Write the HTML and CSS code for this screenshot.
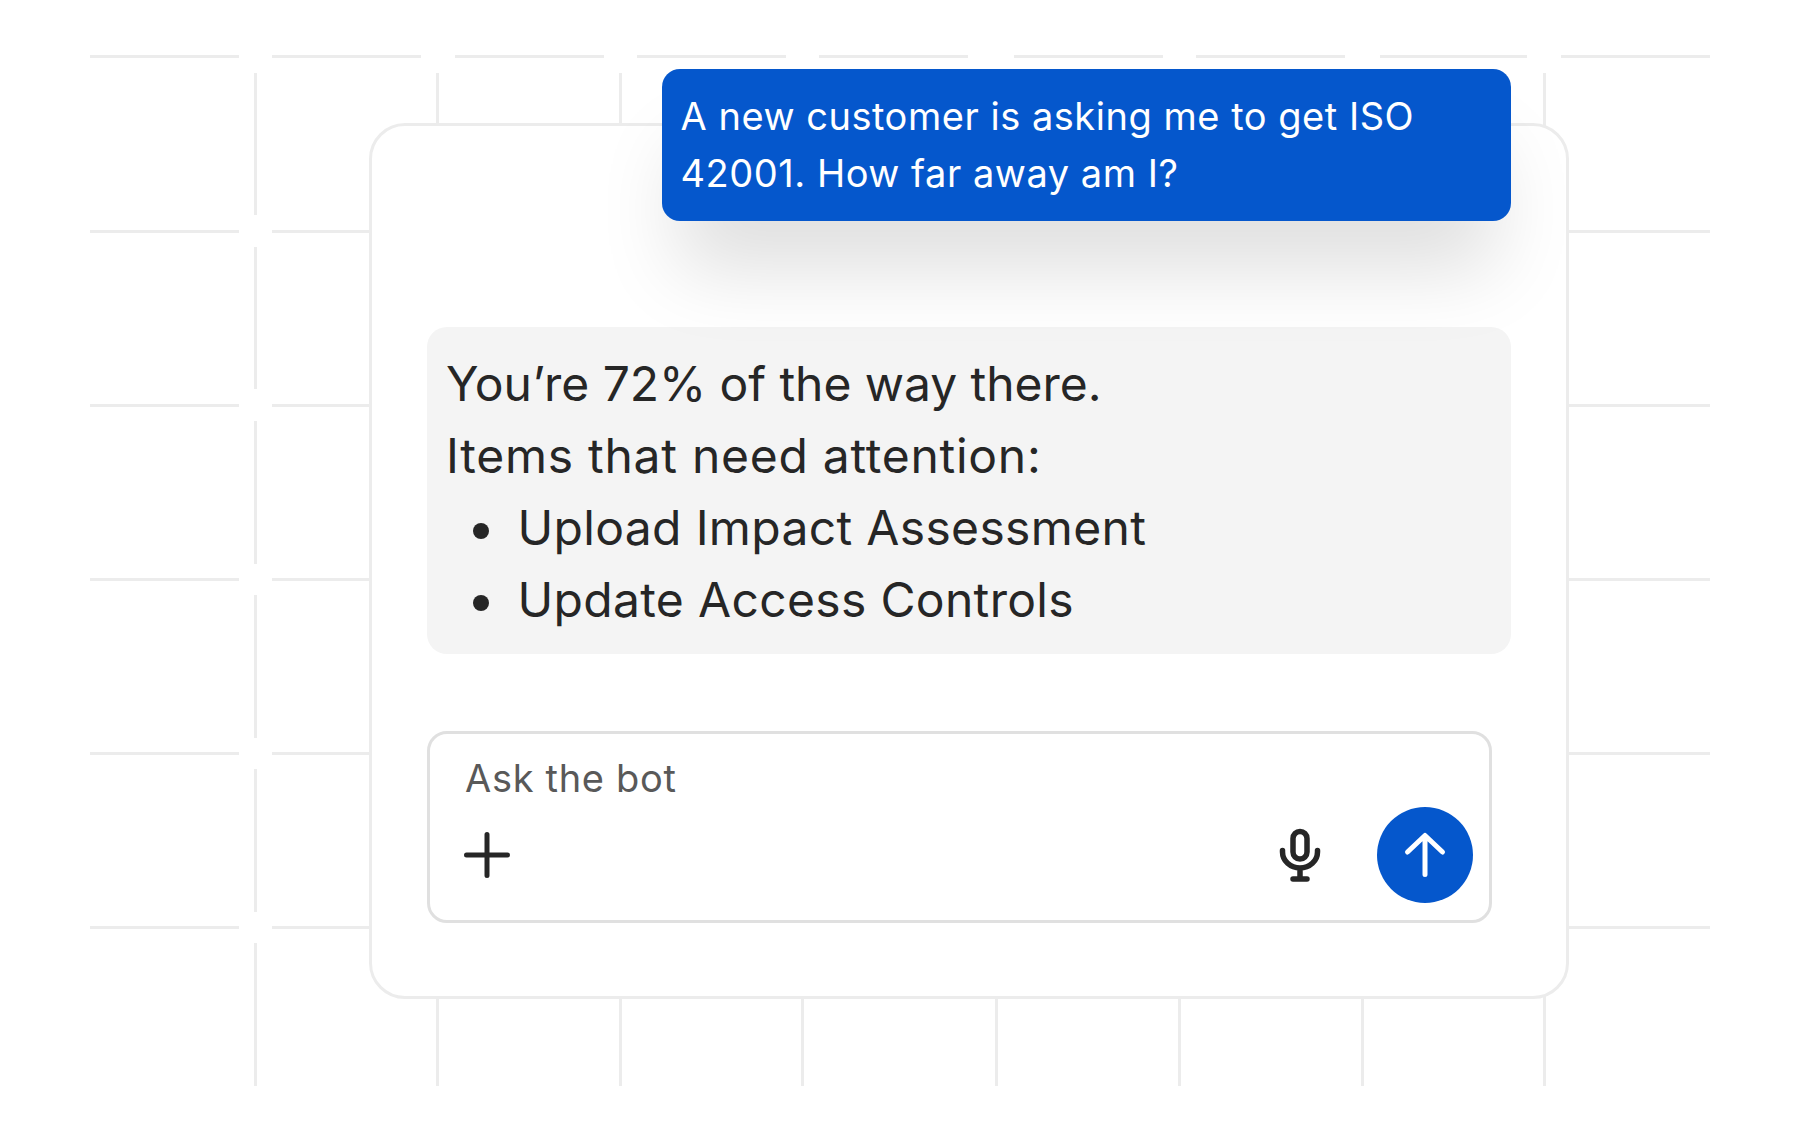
FILE: index.html
```html
<!DOCTYPE html>
<html lang="en">
<head>
    <meta charset="UTF-8">
    <meta name="viewport" content="width=device-width, initial-scale=1.0">
    <title>Ask the bot</title>
    <link rel="stylesheet" href="styles.css">
</head>
<body>
    <div class="stage">
        <svg class="grid" width="1800" height="1143" viewBox="0 0 1800 1143" fill="none" stroke="#ececec" stroke-width="3">
            <path d="M90 56.5H239M272 56.5H421M455 56.5H604M637 56.5H786M819 56.5H968M1014 56.5H1163M1196 56.5H1345M1380 56.5H1527M1561 56.5H1710"/>
            <path d="M90 231.5H239M272 231.5H421M1561 231.5H1710"/>
            <path d="M90 405.5H239M272 405.5H421M1561 405.5H1710"/>
            <path d="M90 579.5H239M272 579.5H421M1561 579.5H1710"/>
            <path d="M90 753.5H239M272 753.5H421M1561 753.5H1710"/>
            <path d="M90 927.5H239M272 927.5H421M1561 927.5H1710"/>
            <path d="M255.500 73V215M255.500 247V389M255.500 421V564M255.500 595V738M255.500 769V912M255.500 943V1086"/>
            <path d="M437.500 73V130M620.500 73V130M1544.500 73V130"/>
            <path d="M437.500 995V1086M620.500 995V1086M802.500 995V1086M996.500 995V1086M1179.500 995V1086M1362.500 995V1086M1544.500 995V1086"/>
        </svg>

        <div class="card">
            <div class="bubble-user">A new customer is asking me to get ISO 42001. How far away am I?</div>
            <div class="bubble-bot">
                <p class="line-first">You’re 72% of the way there.</p>
                <p class="line-second">Items that need attention:</p>
                <ul>
                    <li>Upload Impact Assessment</li>
                    <li>Update Access Controls</li>
                </ul>
            </div>
            <div class="ask-box">
                <div class="ask-label">Ask the bot</div>
                <div class="ask-tools">
                    <svg class="icon-plus" width="46" height="46" viewBox="0 0 46 46" fill="none" stroke="#262626" stroke-width="5" stroke-linecap="round">
                        <path d="M23 2.500V43.500M2.500 23H43.500"/>
                    </svg>
                    <svg class="icon-mic" width="44" height="54" viewBox="0 0 44 54" fill="none" stroke="#262626" stroke-width="5.500" stroke-linecap="round">
                        <rect x="15" y="3.500" width="14" height="27.500" rx="7"/>
                        <path d="M4.500 22.500V24A17.500 16 0 0 0 39.500 24V22.500M22 40V50M15 51H29"/>
                    </svg>
                    <button class="send">
                        <svg width="46" height="46" viewBox="0 0 46 46" fill="none" stroke="#fff" stroke-width="5" stroke-linecap="round" stroke-linejoin="round">
                            <path d="M23 42.500V4M5.500 20L23 3.500L40.500 20"/>
                        </svg>
                    </button>
                </div>
            </div>
        </div>
    </div>
</body>
</html>
```
FILE: styles.css
```css
* {
    box-sizing: border-box;
}
body {
    font-family: Inter, 'Noto Sans', sans-serif;
    margin: 0;
    background-color: #ffffff;
    color: #262626;
}
.stage {
    position: relative;
    width: 1800px;
    height: 1143px;
    padding: 123px 0 0 369px;
    overflow: hidden;
}
.grid {
    position: absolute;
    left: 0;
    top: 0;
}
.card {
    position: relative;
    width: 1200px;
    height: 876px;
    padding: 0 55px;
    background-color: #ffffff;
    border: 3px solid #ececec;
    border-radius: 36px;
}
.bubble-user {
    position: relative;
    z-index: 1;
    width: 849.500px;
    height: 152px;
    margin: -57px 0 0 234.500px;
    padding: 19px 19px;
    background-color: #0557cc;
    color: #ffffff;
    font-size: 38px;
    line-height: 57px;
    letter-spacing: 0.52px;
    border-radius: 18px;
    box-shadow: 0 64px 80px -16px rgba(0, 0, 0, 0.13);
}
.bubble-bot {
    width: 1084px;
    height: 327px;
    margin-top: 106px;
    padding: 21px 19px;
    background-color: #f4f4f4;
    font-size: 48px;
    line-height: 72px;
    letter-spacing: 0.33px;
    border-radius: 20px;
}
.bubble-bot p {
    margin: 0;
}
.line-first {
    letter-spacing: -0.05px;
}
.line-second {
    letter-spacing: 0.73px;
}
.bubble-bot ul {
    margin: 0;
    padding: 0 0 0 27px;
    list-style: none;
}
.bubble-bot li {
    display: flex;
    align-items: center;
}
.bubble-bot li::before {
    content: "";
    width: 16px;
    height: 16px;
    margin: 5px 28.500px 0 0;
    background-color: #262626;
    border-radius: 50%;
}
.ask-box {
    width: 1065px;
    height: 192px;
    margin-top: 77px;
    padding: 17px 16px 16px 35px;
    border: 3px solid #e0e0e0;
    border-radius: 20px;
}
.ask-label {
    color: #595959;
    font-size: 38px;
    line-height: 54px;
    letter-spacing: 0.68px;
}
.ask-tools {
    display: flex;
    align-items: center;
    margin-top: 2px;
}
.icon-plus {
    margin-left: -1px;
}
.icon-mic {
    margin-left: auto;
    margin-right: 55px;
}
.send {
    display: flex;
    align-items: center;
    justify-content: center;
    width: 96px;
    height: 96px;
    padding: 0;
    background-color: #0557cc;
    border: none;
    border-radius: 50%;
}
```
